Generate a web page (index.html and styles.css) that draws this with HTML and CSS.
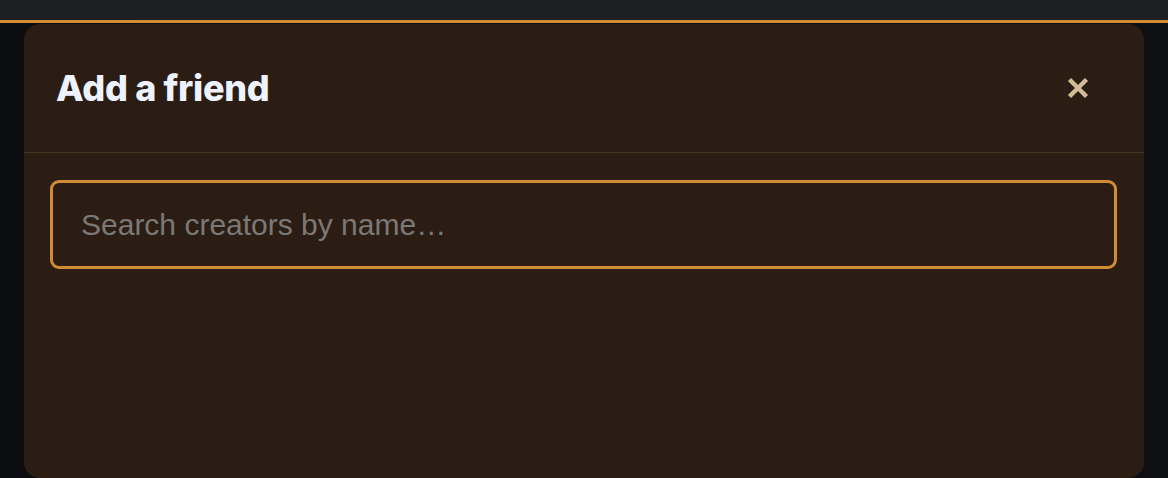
FILE: index.html
```html
<!DOCTYPE html>
<html lang="en">
<head>
<meta charset="utf-8">
<title>Add a friend</title>
<link rel="stylesheet" href="styles.css">
</head>
<body>
<div class="topbar"></div>
<div class="overlay">
  <div class="modal">
    <div class="modal-header">
      <h2 class="modal-title">Add a friend</h2>
      <button class="close-btn" aria-label="Close">
        <svg width="24" height="24" viewBox="0 0 24 24"><path d="M3.5 3.5 L20.5 20.5 M20.5 3.5 L3.5 20.5" stroke="#d4bc98" stroke-width="4.4" fill="none"/></svg>
      </button>
    </div>
    <div class="modal-body">
      <input class="search" type="text" placeholder="Search creators by name…">
    </div>
  </div>
</div>
</body>
</html>
```
FILE: styles.css
```css
* { box-sizing: border-box; }
html, body { margin: 0; padding: 0; }
body {
  width: 1168px;
  height: 478px;
  overflow: hidden;
  background: #0b0c0f;
  font-family: Inter, "Liberation Sans", sans-serif;
}
.topbar {
  height: 23px;
  background: #1e1f23;
  border-bottom: 3px solid #d08c35;
}
.overlay {
  padding: 1px 24px 0 24px;
  background: linear-gradient(90deg, #0a0c10 0%, #0e0f12 100%);
  height: 455px;
}
.modal {
  height: 454px;
  background: #2b1d14;
  border-radius: 16px;
  display: flex;
  flex-direction: column;
}
.modal-header {
  height: 129px;
  display: flex;
  align-items: center;
  justify-content: space-between;
  padding: 0 54px 0 32px;
  border-bottom: 1px solid #47331f;
}
.modal-title {
  margin: 0;
  font-family: Inter, "Liberation Sans", sans-serif;
  font-weight: 800;
  font-size: 36px;
  letter-spacing: -0.3px;
  color: #eef2ff;
  line-height: 1;
  padding-bottom: 1px;
}
.close-btn {
  background: none;
  border: 0;
  padding: 0;
  width: 24px;
  height: 24px;
  display: flex;
  cursor: pointer;
}
.modal-body {
  padding: 27px 27px 0 26px;
}
.search {
  display: block;
  width: 100%;
  height: 89px;
  background: #2b1d14;
  border: 3px solid #d08c35;
  border-radius: 9px;
  padding: 0 28px;
  font-family: "Liberation Sans", Arial, sans-serif;
  font-size: 30px;
  color: #e8e8e8;
  outline: none;
}
.search::placeholder {
  color: #7b7976;
}
```
